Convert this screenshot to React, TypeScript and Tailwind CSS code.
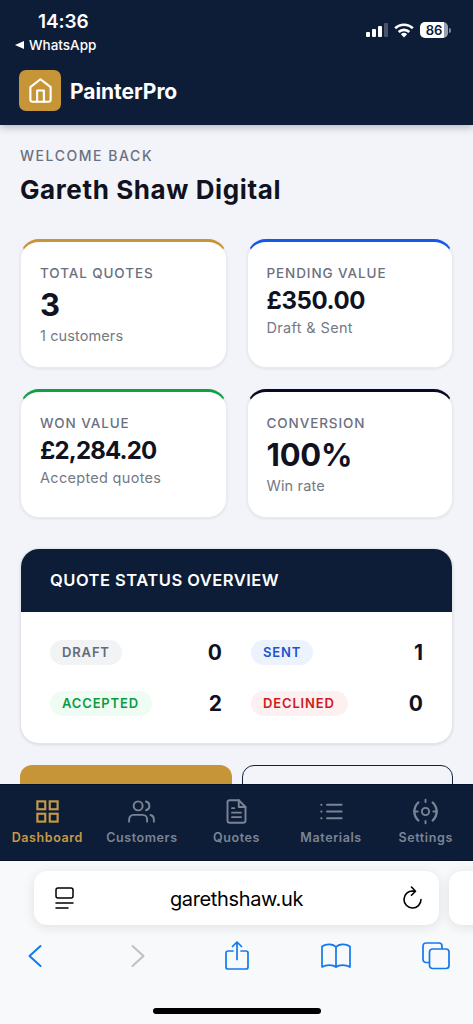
import clsx from 'clsx';
import { ReactNode } from 'react';

const stats = [
    { label: 'TOTAL QUOTES', value: '3', note: '1 customers', border: 'border-t-[#c69538]', size: 'text-[31px] leading-[39px]', noteTracking: 'tracking-[0.1px]' },
    { label: 'PENDING VALUE', value: '£350.00', note: 'Draft & Sent', border: 'border-t-[#1557e6]', size: 'text-[24px] leading-[31px] tracking-[-0.4px]', noteTracking: 'tracking-[0.35px]' },
    { label: 'WON VALUE', value: '£2,284.20', note: 'Accepted quotes', border: 'border-t-[#10a044]', size: 'text-[24px] leading-[31px] tracking-[-0.85px]', noteTracking: 'tracking-[0.3px]' },
    { label: 'CONVERSION', value: '100%', note: 'Win rate', border: 'border-t-[#070a25]', size: 'text-[31px] leading-[39px] tracking-[-0.2px]', noteTracking: 'tracking-[0.15px]' },
];

const statuses = [
    { label: 'DRAFT', count: 0, style: 'bg-[#f2f3f5] text-[#636b7b] w-[72px]' },
    { label: 'SENT', count: 1, style: 'bg-[#edf3fe] text-[#1d52d4] w-[62px]' },
    { label: 'ACCEPTED', count: 2, style: 'bg-[#effcf4] text-[#0b9c3f] w-[102px]' },
    { label: 'DECLINED', count: 0, style: 'bg-[#fcf0f0] text-[#cf1a1f] w-[97px]' },
];

const Icon = ({ children, className, strokeWidth = 1.7 }: { children: ReactNode; className?: string; strokeWidth?: number }) => (
    <svg
        viewBox="0 0 24 24"
        fill="none"
        stroke="currentColor"
        strokeWidth={strokeWidth}
        strokeLinecap="round"
        strokeLinejoin="round"
        className={className}
    >
        {children}
    </svg>
);

const navItems = [
    {
        label: 'Dashboard',
        icon: (
            <g strokeLinejoin="miter" strokeWidth="1.9">
                <rect x="3" y="3" width="7" height="7" />
                <rect x="14" y="3" width="7" height="7" />
                <rect x="3" y="14" width="7" height="7" />
                <rect x="14" y="14" width="7" height="7" />
            </g>
        ),
    },
    {
        label: 'Customers',
        icon: (
            <>
                <path d="M17 21v-2a4 4 0 0 0-4-4H5a4 4 0 0 0-4 4v2" />
                <circle cx="9" cy="7" r="4" />
                <path d="M23 21v-2a4 4 0 0 0-3-3.87M16 3.13a4 4 0 0 1 0 7.75" />
            </>
        ),
    },
    {
        label: 'Quotes',
        icon: (
            <>
                <path d="M14 2H6a2 2 0 0 0-2 2v16a2 2 0 0 0 2 2h12a2 2 0 0 0 2-2V8z" />
                <path d="M14 2v6h6M16 13H8M16 17H8M10 9H8" />
            </>
        ),
    },
    {
        label: 'Materials',
        icon: (
            <>
                <path d="M8 6h13M8 12h13M8 18h13" />
                <path d="M3 6h.01M3 12h.01M3 18h.01" strokeWidth="2" />
            </>
        ),
    },
    {
        label: 'Settings',
        icon: (
            <>
                <circle cx="12" cy="12" r="3.2" />
                <path d="M12 1.500v2M12 20.500v2M2 12h3M19 12h3" />
                <path d="M5.600 4C.9 8.700.9 15.300 5.600 20M18.400 4c4.700 4.700 4.700 11.300 0 16" strokeWidth="2.100" />
            </>
        ),
    },
];

const Header = () => (
    <header className="z-10 h-[125px] flex-none bg-[#0d1d38] text-white shadow-[0_2px_8px_rgba(13,29,56,0.3)]">
        <div className="flex h-[58px] justify-between">
            <div className="flex flex-col pl-[15px] pt-2">
                <div className="pl-[23px] text-[19px] font-semibold leading-[27px] tracking-[-0.1px]">14:36</div>
                <div className="flex h-5 items-center gap-[5px] text-[13.500px] font-medium leading-5">
                    <svg viewBox="0 0 9 8" className="h-2 w-[9px]" fill="currentColor">
                        <path d="M9 0v8L0 4z" />
                    </svg>
                    WhatsApp
                </div>
            </div>
            <div className="mt-[22px] flex h-4 items-center pr-[22px]">
                <svg viewBox="0 0 22 16" className="h-4 w-[22px]" fill="currentColor">
                    <rect x="0" y="10" width="4" height="5" rx="1" />
                    <rect x="6" y="7" width="4" height="8" rx="1" />
                    <rect x="12" y="4" width="4" height="11" rx="1" />
                    <rect x="18" y="1" width="4" height="14" rx="1" opacity=".25" />
                </svg>
                <svg viewBox="0 0 20 15" className="ml-1.5 h-[15px] w-5" fill="none" stroke="currentColor" strokeWidth="2.600">
                    <path d="M1.200 5.300a12.600 12.600 0 0 1 17.600 0M4.700 9a7.600 7.600 0 0 1 10.600 0" />
                    <path d="M10 14.500 6.900 11.300a4.500 4.500 0 0 1 6.200 0z" fill="currentColor" stroke="none" />
                </svg>
                <div className="ml-1.5 flex h-4 w-7 items-center justify-center rounded-[5px] bg-linear-to-r from-white from-86% to-[#9aa2b0] to-86% text-[13px] font-semibold leading-4 text-[#0d1d38]">
                    86
                </div>
                <div className="ml-px h-[5px] w-[2px] rounded-r-full bg-[#8088a0]" />
            </div>
        </div>
        <div className="flex items-center gap-[9px] pl-[19px] pt-3">
            <div className="flex h-[41px] w-[42px] items-center justify-center rounded-[7px] bg-[#c69538]">
                <Icon className="h-[27px] w-[27px]" strokeWidth={1.9}>
                    <path d="m3 9 9-7 9 7v11a2 2 0 0 1-2 2H5a2 2 0 0 1-2-2z" />
                    <path d="M9 22V12h6v10" />
                </Icon>
            </div>
            <div className="pt-0.5 text-[21px] font-bold tracking-[-0.05px]">PainterPro</div>
        </div>
    </header>
);

const StatCard = ({ stat }: { stat: (typeof stats)[number] }) => (
    <div
        className={clsx(
            'h-[129px] rounded-[19px] border border-t-[3px] border-[#e9eaef] bg-white pl-[19px] pt-5 shadow-[0_1px_3px_rgba(0,0,0,0.08)]',
            stat.border
        )}
    >
        <div className="whitespace-nowrap text-[13.500px] font-medium leading-[22px] tracking-[0.9px] text-[#6a7080]">{stat.label}</div>
        <div className={clsx('mt-px font-bold text-[#11121f]', stat.size)}>{stat.value}</div>
        <div className={clsx('pt-px text-[14.500px] leading-[22px] text-[#737985]', stat.noteTracking)}>{stat.note}</div>
    </div>
);

const StatusOverview = () => (
    <section className="mt-[30px] h-[196px] overflow-hidden rounded-[19px] border border-[#e3e5eb] bg-white shadow-[0_1px_3px_rgba(0,0,0,0.1)]">
        <h2 className="h-[63px] bg-[#0d1d38] pl-[29px] text-[16.500px] font-semibold leading-[62px] tracking-[0.5px] text-white">
            QUOTE STATUS OVERVIEW
        </h2>
        <div className="grid grid-cols-2 gap-x-[29px] gap-y-[18px] px-[29px] pt-6">
            {statuses.map((status) => (
                <div key={status.label} className="flex h-[33px] items-center justify-between">
                    <span
                        className={clsx(
                            'h-[25px] whitespace-nowrap rounded-full pl-3 text-[13px] font-semibold leading-[25px] tracking-[0.85px]',
                            status.style
                        )}
                    >
                        {status.label}
                    </span>
                    <span className="pt-px text-[21px] font-bold text-[#11121f]">{status.count}</span>
                </div>
            ))}
        </div>
    </section>
);

const BottomNav = () => (
    <nav className="grid h-[77px] flex-none grid-cols-5 border-y border-[#07132a] bg-[#0d1d38]">
        {navItems.map((item, index) => (
            <div
                key={item.label}
                className={clsx('flex flex-col items-center pt-[13px]', index === 0 ? 'text-[#c69a45]' : 'text-[#7b8495]')}
            >
                <Icon className="h-[27px] w-[27px]">{item.icon}</Icon>
                <div className="mt-[3px] text-[12.500px] font-semibold leading-[19px] tracking-[0.6px]">{item.label}</div>
            </div>
        ))}
    </nav>
);

const BrowserBar = () => (
    <footer className="flex h-[163px] flex-none flex-col overflow-hidden bg-[#f8f9fb]">
        <div className="flex gap-2.5 pl-[34px] pt-2.5">
            <div className="flex h-[54px] w-[405px] flex-none items-center justify-between rounded-[13px] bg-white pl-[21px] pr-4 text-black shadow-[0_2px_12px_rgba(0,0,0,0.1)]">
                <svg viewBox="0 0 19 22" className="h-[22px] w-[19px]" fill="none" stroke="currentColor" strokeWidth="1.500" strokeLinecap="round">
                    <rect x="1" y="1" width="17" height="10" rx="2" />
                    <path d="M1 16h17M1 21h12" />
                </svg>
                <div className="pr-0.5 pt-0.5 text-[20px] tracking-[-0.35px]">garethshaw.uk</div>
                <svg viewBox="0 0 22 24" className="h-6 w-[22px]" fill="none" stroke="currentColor" strokeWidth="1.600" strokeLinecap="round" strokeLinejoin="round">
                    <path d="M12 5a8.500 8.500 0 1 0 8 8.500M10.500 1l4 4.200-4 4.100M14.500 5.200H11" />
                </svg>
            </div>
            <div className="h-[54px] w-[60px] flex-none rounded-[13px] bg-white shadow-[0_2px_12px_rgba(0,0,0,0.1)]" />
        </div>
        <div className="flex h-[62px] items-center pl-7 text-[#1279ed]">
            <svg viewBox="0 0 14 24" className="h-6 w-3.5" fill="none" stroke="currentColor" strokeWidth="2" strokeLinecap="round" strokeLinejoin="round">
                <path d="M12.500 2 1.500 12l11 10" />
            </svg>
            <svg viewBox="0 0 14 24" className="ml-[89px] h-6 w-3.5 text-[#bfc0c3]" fill="none" stroke="currentColor" strokeWidth="2" strokeLinecap="round" strokeLinejoin="round">
                <path d="m1.500 2 11 10-11 10" />
            </svg>
            <svg viewBox="0 0 24 30" className="ml-[80px] h-[30px] w-6" fill="none" stroke="currentColor" strokeWidth="1.700" strokeLinecap="round" strokeLinejoin="round">
                <path d="M8 10H3a2 2 0 0 0-2 2v14a2 2 0 0 0 2 2h18a2 2 0 0 0 2-2V12a2 2 0 0 0-2-2h-5M12 18.500V1M7.500 5.500 12 1l4.500 4.500" />
            </svg>
            <svg viewBox="0 0 30 26" className="ml-[72px] h-[26px] w-[30px]" fill="none" stroke="currentColor" strokeWidth="1.700" strokeLinecap="round" strokeLinejoin="round">
                <path d="M15 4C12 .5 5 .5 1 3.500V24c4-2.500 11-2.500 14 0 3-2.500 10-2.500 14 0V3.500C25 .5 18 .5 15 4zv20" />
            </svg>
            <svg viewBox="0 0 28 28" className="ml-[71px] h-7 w-7" fill="none" stroke="currentColor" strokeWidth="1.700" strokeLinejoin="round">
                <path d="M7 20.500H4a3 3 0 0 1-3-3V4a3 3 0 0 1 3-3h13a3 3 0 0 1 3 3v3" />
                <rect x="7.500" y="7" width="19.500" height="19.500" rx="3" />
            </svg>
        </div>
        <div className="mx-auto mt-[21px] h-1.5 w-[168px] rounded-full bg-black" />
    </footer>
);

export default function App() {
    return (
        <div className="flex h-[1024px] w-[473px] flex-col overflow-hidden bg-[#f3f4f9] font-['Inter','Liberation_Sans',sans-serif]">
            <Header />
            <main className="h-[659px] flex-none overflow-hidden px-5 pt-5">
                <div className="text-[14px] font-medium leading-[22px] tracking-[1.55px] text-[#6a7080]">WELCOME BACK</div>
                <h1 className="pt-0.5 text-[26px] font-bold leading-[42px] tracking-[0.6px] text-[#11121f]">Gareth Shaw Digital</h1>
                <div className="mt-7 grid grid-cols-2 gap-x-5 gap-y-[21px]">
                    {stats.map((stat) => (
                        <StatCard key={stat.label} stat={stat} />
                    ))}
                </div>
                <StatusOverview />
                <div className="mt-[21px] grid grid-cols-2 gap-2.5">
                    <button className="h-14 rounded-xl bg-[#c69538]" />
                    <button className="h-14 rounded-xl border-[1.500px] border-[#14213d]" />
                </div>
            </main>
            <BottomNav />
            <BrowserBar />
        </div>
    );
}
